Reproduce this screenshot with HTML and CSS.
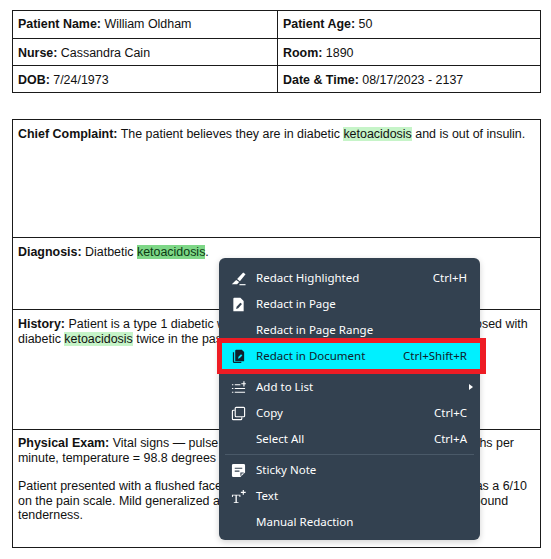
FILE: index.html
```html
<!DOCTYPE html>
<html lang="en">
<head>
<meta charset="utf-8">
<title>Patient chart</title>
<link rel="stylesheet" href="styles.css">
</head>
<body>
<main class="page">
  <table class="info">
    <tr class="r1"><td class="c1"><b>Patient Name:</b> William Oldham</td><td><b>Patient Age:</b> 50</td></tr>
    <tr class="r2"><td class="c1"><b>Nurse:</b> Cassandra Cain</td><td><b>Room:</b> 1890</td></tr>
    <tr class="r2"><td class="c1"><b>DOB:</b> 7/24/1973</td><td><b>Date &amp; Time:</b> 08/17/2023 - 2137</td></tr>
  </table>
  <table class="notes">
    <tr class="n1"><td><b>Chief Complaint:</b> The patient believes they are in diabetic <mark class="hl">ketoacidosis</mark> and is out of insulin.</td></tr>
    <tr class="n2"><td><b>Diagnosis:</b> Diatbetic <mark class="hl-on">ketoacidosis</mark>.</td></tr>
    <tr class="n3"><td><b>History:</b> Patient is a type 1 diabetic who was diagnosed at 12. She has been diagnosed with<br>diabetic <mark class="hl">ketoacidosis</mark> twice in the past and has been treated successfully.</td></tr>
    <tr class="n4"><td><b>Physical Exam:</b> Vital signs — pulse = 110 beats per minute, respirations = 24 breaths per<br>minute, temperature = 98.8 degrees Fahrenheit.<p class="para">Patient presented with a flushed face and dry mucous membranes. Pain was rated as a 6/10<br>on the pain scale. Mild generalized abdominal tenderness is present without any rebound<br>tenderness.</p></td></tr>
  </table>
</main>

<nav class="menu">
  <ul class="group">
    <li class="item"><svg class="ico" viewBox="0 0 16 16"><path d="M6.500 8.500 13 1.500 15.500 3.500 9.500 11 Z M5.500 9.500 8.700 11.800 6.500 14H.8Z" fill="#fff"/><path d="M9 14h6.500v1.200H9z" fill="#fff"/></svg><span class="label">Redact Highlighted</span><span class="key">Ctrl+H</span></li>
    <li class="item"><svg class="ico" viewBox="0 0 16 16"><path d="M3.500.8h6.500l3.500 3.500V15.200H2.500V1.800a1 1 0 0 1 1-1Z" fill="#fff"/><path d="M5.500 12.800 6 10.500 10 6l1.700 1.500-4 4.500Z" fill="#334150"/></svg><span class="label">Redact in Page</span></li>
    <li class="item"><span class="ico"></span><span class="label">Redact in Page Range</span></li>
    <li class="item active"><svg class="ico" viewBox="0 0 16 16"><path d="M5.500.8h6l2.500 2.500V13H4.500V1.800a1 1 0 0 1 1-1Z" fill="#10222c"/><path d="M2 3.500h1.300v10H11V15H3.500Q2 15 2 13.500Z" fill="#10222c"/><path d="M7.500 10.500 8 8.300l2.700-2.800 1.400 1.300-2.700 2.900Z" fill="#00f0ff"/></svg><span class="label">Redact in Document</span><span class="key">Ctrl+Shift+R</span></li>
  </ul>
  <hr class="sep hidden">
  <ul class="group">
    <li class="item"><svg class="ico" viewBox="0 0 16 16"><path d="M1 4.500h1.500v1.200H1zM4 4.500h6v1.200H4zM1 8.500h1.500v1.200H1zM4 8.500h11v1.200H4zM1 12.500h1.500v1.200H1zM4 12.500h11v1.200H4zM11 3.400h2.200V1.200h1.200v2.200h1.400v1.200h-1.400v2.200h-1.200V4.600H11z" fill="#fff"/></svg><span class="label">Add to List</span><span class="arrow"></span></li>
    <li class="item"><svg class="ico" viewBox="0 0 16 16" fill="none" stroke="#fff"><rect x="4.500" y="1.500" width="10" height="10" rx="1" stroke-width="1.200"/><path d="M4 4.500H2.500a1 1 0 0 0-1 1V13.500a1 1 0 0 0 1 1H10.500a1 1 0 0 0 1-1V12" stroke-width="1.200"/></svg><span class="label">Copy</span><span class="key">Ctrl+C</span></li>
    <li class="item"><span class="ico"></span><span class="label">Select All</span><span class="key">Ctrl+A</span></li>
  </ul>
  <hr class="sep">
  <ul class="group">
    <li class="item"><svg class="ico" viewBox="0 0 16 16"><path d="M2.500 1h11a1.500 1.500 0 0 1 1.500 1.500V10l-5 5H2.500A1.500 1.500 0 0 1 1 13.500v-11A1.500 1.500 0 0 1 2.500 1Z" fill="#fff"/><path d="M4 5h8v1.200H4zM4 8h5v1.200H4zM10 13.500v-3.500h3.500v1.200h-2.300v2.300Z" fill="#334150"/></svg><span class="label">Sticky Note</span></li>
    <li class="item"><svg class="ico" viewBox="0 0 16 16"><path d="M1 6h9v2.500H9V7H6.200v7H8v1H3v-1h1.800V7H2v1.500H1ZM10.500 3h2V1h1.200v2h2v1.200h-2v2h-1.200v-2h-2Z" fill="#fff"/></svg><span class="label">Text</span></li>
    <li class="item"><span class="ico"></span><span class="label">Manual Redaction</span></li>
  </ul>
</nav>
</body>
</html>
```
FILE: styles.css
```css
html, body {
  margin: 0;
  padding: 0;
  background: #fff;
}
body {
  width: 551px;
  height: 559px;
  overflow: hidden;
  position: relative;
  font-family: "Liberation Sans", Arial, sans-serif;
  font-size: 12.45px;
  line-height: 14.5px;
  color: #111;
}
.page {
  padding: 10px 9px 0 12px;
}
table {
  border-collapse: collapse;
  width: 529px;
  table-layout: fixed;
}
td {
  border: 1px solid #1a1a1a;
  padding: 6px 5px 3px;
  vertical-align: top;
  white-space: nowrap;
  box-sizing: border-box;
}
.info {
  margin-bottom: 26px;
}
.info .c1 {
  width: 265px;
}
.r2 td,
.n1 td,
.n2 td,
.n3 td {
  padding-top: 7px;
  padding-bottom: 2px;
}
.r1 { height: 28px; }
.r2 { height: 27px; }
.n1 { height: 118px; }
.n2 { height: 72px; }
.n3 { height: 120px; }
.n4 { height: 118px; }
.para {
  margin: 14px 0 0;
}
.hl {
  background: #c6f4c8;
  color: #111;
}
.hl-on {
  background: #7ed787;
  color: #0c3a14;
}
.menu {
  position: absolute;
  left: 219px;
  top: 258px;
  width: 261px;
  height: 282px;
  box-sizing: border-box;
  padding: 7px 0 5px;
  background: #334150;
  border-radius: 6px;
  box-shadow: 0 2px 6px rgba(0, 0, 0, 0.18);
  font-family: "Noto Sans", "Open Sans", sans-serif;
  font-size: 11.5px;
  color: #fff;
}
.group {
  list-style: none;
  margin: 0;
  padding: 0;
}
.item {
  display: flex;
  align-items: center;
  height: 26px;
  padding: 0 13px 0 12px;
  position: relative;
}
.ico {
  flex: none;
  width: 15px;
  height: 15px;
  margin-right: 10px;
}
.label {
  flex: 1;
}
.key {
  flex: none;
}
.active {
  margin-left: 3px;
  padding-left: 9px;
  background: #00f0ff;
  color: #10222c;
}
.active::after {
  content: "";
  position: absolute;
  left: -5px;
  right: -6px;
  top: -5px;
  bottom: -5px;
  border: 5px solid #ee1c24;
  border-right-width: 6px;
  pointer-events: none;
}
.arrow {
  width: 0;
  height: 0;
  border-left: 4px solid #fff;
  border-top: 3.5px solid transparent;
  border-bottom: 3.5px solid transparent;
  margin-right: -6px;
}
.sep {
  border: 0;
  border-top: 1px solid #4a5968;
  margin: 2px 6px 2px;
}
.hidden {
  border-top-color: transparent;
}
```
